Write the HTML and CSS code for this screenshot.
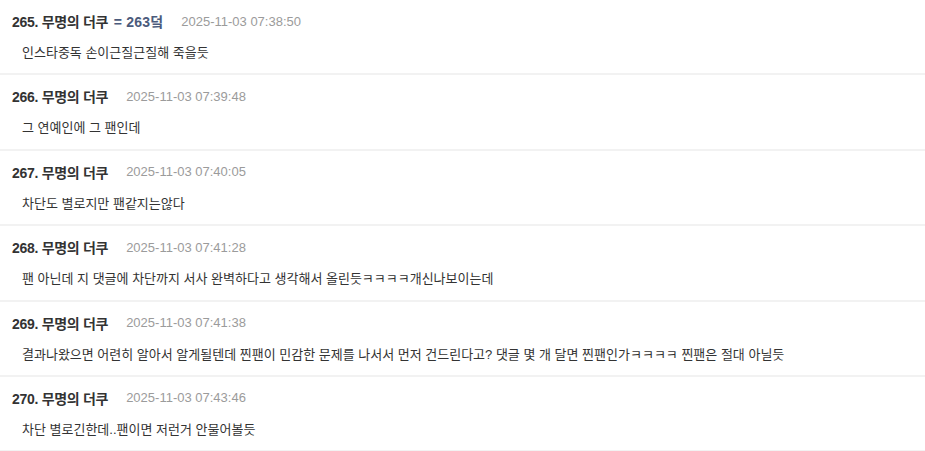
FILE: index.html
```html
<!DOCTYPE html>
<html lang="ko">
<head>
<meta charset="utf-8">
<title>댓글</title>
<link rel="stylesheet" href="styles.css">
</head>
<body>
<ul class="comments">
  <li class="comment">
    <div class="meta"><span class="author">265. 무명의 더쿠 <span class="reply">= 263덬</span></span><span class="date">2025-11-03 07:38:50</span></div>
    <div class="text">인스타중독 손이근질근질해 죽을듯</div>
  </li>
  <li class="comment">
    <div class="meta"><span class="author">266. 무명의 더쿠</span><span class="date">2025-11-03 07:39:48</span></div>
    <div class="text">그 연예인에 그 팬인데</div>
  </li>
  <li class="comment">
    <div class="meta"><span class="author">267. 무명의 더쿠</span><span class="date">2025-11-03 07:40:05</span></div>
    <div class="text">차단도 별로지만 팬같지는않다</div>
  </li>
  <li class="comment">
    <div class="meta"><span class="author">268. 무명의 더쿠</span><span class="date">2025-11-03 07:41:28</span></div>
    <div class="text">팬 아닌데 지 댓글에 차단까지 서사 완벽하다고 생각해서 올린듯ㅋㅋㅋㅋ개신나보이는데</div>
  </li>
  <li class="comment">
    <div class="meta"><span class="author">269. 무명의 더쿠</span><span class="date">2025-11-03 07:41:38</span></div>
    <div class="text">결과나왔으면 어련히 알아서 알게될텐데 찐팬이 민감한 문제를 나서서 먼저 건드린다고? 댓글 몇 개 달면 찐팬인가ㅋㅋㅋㅋ 찐팬은 절대 아닐듯</div>
  </li>
  <li class="comment">
    <div class="meta"><span class="author">270. 무명의 더쿠</span><span class="date">2025-11-03 07:43:46</span></div>
    <div class="text">차단 별로긴한데..팬이면 저런거 안물어볼듯</div>
  </li>
</ul>
</body>
</html>
```
FILE: styles.css
```css
html, body {
  margin: 0;
  padding: 0;
  background: #ffffff;
}
body {
  font-family: "Liberation Sans", "Noto Sans CJK KR", sans-serif;
  color: #333333;
}
.comments {
  list-style: none;
  margin: 0;
  padding: 0;
}
.comment {
  height: 75.4px;
  box-sizing: border-box;
  padding: 11px 12px 0;
  border-bottom: 2px solid #f2f2f2;
}
.meta {
  display: flex;
  align-items: center;
  gap: 18px;
  height: 20px;
}
.author {
  font-size: 14px;
  font-weight: bold;
  letter-spacing: -0.3px;
  color: #333333;
}
.reply {
  color: #4b5b7c;
  letter-spacing: 0.2px;
  margin-left: 2px;
}
.date {
  font-size: 13px;
  color: #9b9b9b;
}
.text {
  margin-top: 13px;
  padding-left: 10px;
  font-size: 13px;
  line-height: 18px;
  color: #333333;
}
```
